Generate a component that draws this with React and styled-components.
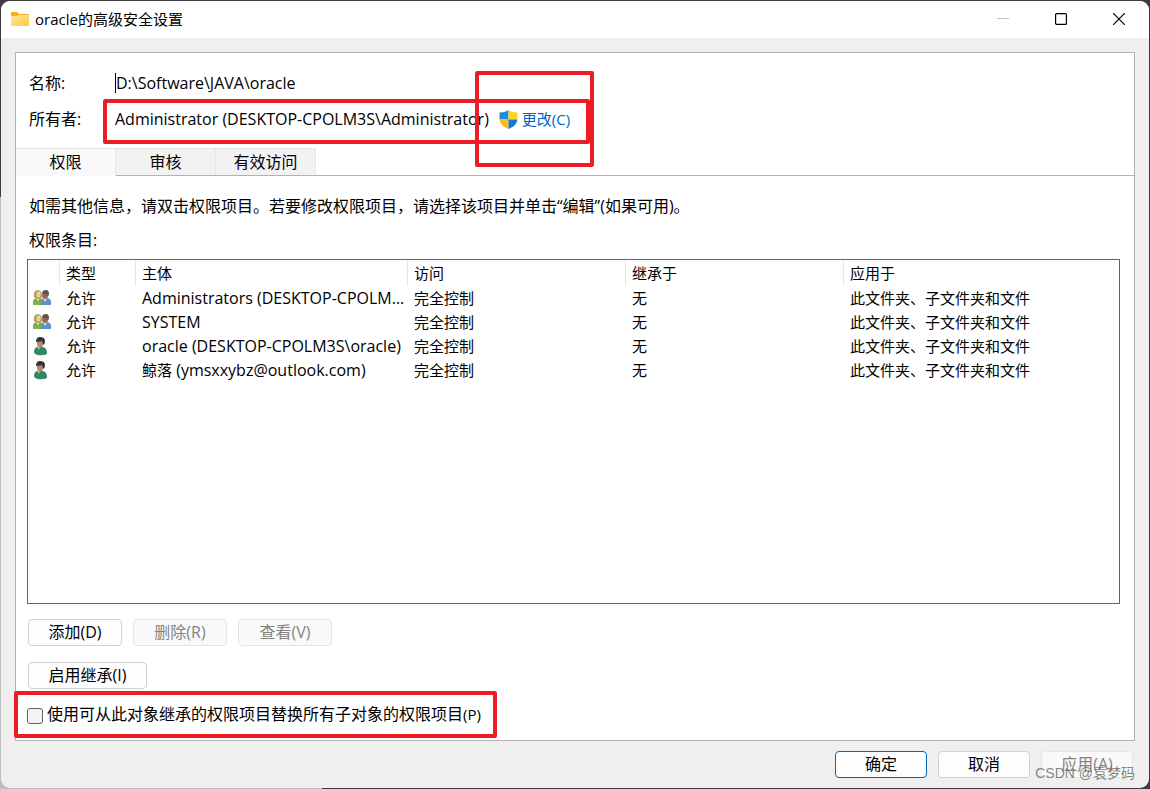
import React from 'react';
import styled, { createGlobalStyle, css } from 'styled-components';

const GlobalStyle = createGlobalStyle`
	* {
		box-sizing: border-box;
	}

	body {
		margin: 0;
		background: #3c3c3c;
		color: #000;
		font-family: 'Open Sans', 'Noto Sans CJK SC', sans-serif;
		font-size: 15px;
	}

	button,
	input {
		font: inherit;
		color: inherit;
	}
`;

const Desktop = styled.div`
	min-height: 100vh;
	padding: 1px;
	display: flex;
	background: linear-gradient(#3c3c3c 0 25%, #bdbdbd 25% 100%) left / 1px 100%
			no-repeat,
		linear-gradient(90deg, #bdbdbd 0 28%, #3c3c3c 28% 100%) bottom / 100% 14px
			no-repeat,
		#3c3c3c;
`;

const Window = styled.div`
	position: relative;
	flex: 1;
	min-width: 0;
	display: flex;
	flex-direction: column;
	background: #efefef;
	border-radius: 9px;
	overflow: hidden;
`;

const TitleBar = styled.header`
	height: 37px;
	padding: 0 1px 1px 9px;
	display: flex;
	align-items: center;
	background: #fff;
`;

const Title = styled.h1`
	flex: 1;
	margin: 0 0 0 5px;
	font-size: 15px;
	font-weight: 400;
	line-height: 24px;
`;

const Caption = styled.button`
	width: 58px;
	height: 36px;
	padding: 0;
	display: flex;
	align-items: center;
	justify-content: center;
	background: none;
	border: none;
	color: ${(props) => (props.disabled ? '#c4c4c4' : '#000')};
`;

const Panel = styled.main`
	flex: 1;
	margin: 14px 14px 0;
	display: flex;
	flex-direction: column;
	background: #fff;
	border: 1px solid #b2b2b2;
`;

const Summary = styled.div`
	padding: 15px 13px 13px;
	display: flex;
	flex-direction: column;
	gap: 6px;
`;

const Field = styled.div`
	height: 30px;
	display: flex;
	align-items: center;
	line-height: 24px;
`;

const FieldLabel = styled.label`
	width: 86px;
	font-size: 16px;
`;

const NameInput = styled.input`
	flex: 1;
	height: 20px;
	padding: 0;
	background: none;
	border: none;
	border-left: 1px solid #000;
	outline: none;
	font-size: 16px;
`;

const Owner = styled.div`
	position: relative;
	display: flex;
	align-items: center;
	gap: 10px;
`;

const OwnerName = styled.span`
	font-size: 16px;
`;

const ChangeLink = styled.a`
	display: flex;
	align-items: center;
	gap: 4px;
	color: #0066cc;
	text-decoration: none;
`;

const Mark = styled.div`
	position: absolute;
	border: 4px solid #ee1c25;
	border-radius: 2px;
	pointer-events: none;
`;

const OwnerMark = styled(Mark)`
	inset: -8px -20px -13px -12px;
`;

const ChangeMark = styled(Mark)`
	top: -36px;
	right: -24px;
	bottom: -36px;
	width: 119px;
`;

const OptionMark = styled(Mark)`
	inset: -11px -16px -12px -13px;
`;

const Tabs = styled.div`
	height: 29px;
	padding-top: 1px;
	display: flex;
	border-bottom: 1px solid #b2b2b2;
`;

const Tab = styled.button`
	width: 100px;
	height: 27px;
	padding: 0 0 1px;
	background: #f2f2f2;
	border: 1px solid #e5e5e5;
	border-left: none;
	border-bottom: none;
	font-size: 16px;
	line-height: 24px;

	${(props) =>
		props.$active &&
		css`
			height: 28px;
			background: #f9f9f9;
		`}
`;

const Pane = styled.section`
	flex: 1;
	padding: 18px 14px 14px 11px;
	display: flex;
	flex-direction: column;
`;

const Note = styled.p`
	margin: 0 0 10px 2px;
	font-size: 16px;
	line-height: 24px;
`;

const ListLabel = styled.div`
	margin: 0 0 7px 2px;
	font-size: 16px;
	line-height: 24px;
`;

const List = styled.div`
	flex: 1;
	border: 1px solid #646464;
`;

const Table = styled.table`
	width: 100%;
	table-layout: fixed;
	border-collapse: separate;
	border-spacing: 0;
`;

const Th = styled.th`
	width: ${(props) => props.$width || 'auto'};
	height: 26px;
	padding: 0 6px;
	border-right: 1px solid #e5e5e5;
	font-weight: 400;
	line-height: 24px;
	text-align: left;

	&:last-child {
		border-right: none;
	}
`;

const Td = styled.td`
	height: 24px;
	padding: 0 2px 0 6px;
	line-height: 24px;
	white-space: nowrap;
	overflow: hidden;
	text-overflow: ellipsis;

	&:first-child {
		padding: 0 4px;
	}

	svg {
		display: block;
	}
`;

const PrincipalTd = styled(Td)`
	font-size: 16px;
`;

const DisplayName = styled.span`
	font-size: 15px;
`;

const Actions = styled.div`
	margin: ${(props) => props.$top}px 0 0 1px;
	display: flex;
	gap: 11px;
`;

const Button = styled.button`
	min-width: ${(props) => props.$width || 94}px;
	height: 27px;
	padding: 0 0 2px;
	background: #fdfdfd;
	border: 1px solid ${(props) => (props.$primary ? '#0067c0' : '#d0d0d0')};
	border-radius: 4px;
	font-size: 16px;
	line-height: 24px;

	&:disabled {
		background: #f9f9f9;
		border-color: #e5e5e5;
		color: #838383;
	}
`;

const Key = styled.span`
	font-size: 15px;
`;

const Option = styled.label`
	position: relative;
	align-self: flex-start;
	margin-top: 13px;
	height: 24px;
	display: flex;
	align-items: center;
	gap: 4px;
	font-size: 16px;
	line-height: 24px;
	white-space: nowrap;
`;

const Checkbox = styled.input`
	appearance: none;
	width: 16px;
	height: 16px;
	margin: 4px 0 0;
	background: #f3f3f3;
	border: 1px solid #626262;
	border-radius: 3px;
`;

const Footer = styled.footer`
	padding: 10px 16px 10px 14px;
	display: flex;
	justify-content: flex-end;
	gap: 11px;
`;

const Watermark = styled.div`
	position: absolute;
	right: 14px;
	bottom: 5px;
	color: rgba(110, 110, 110, 0.85);
	font-family: 'Liberation Sans', 'Noto Sans CJK SC', sans-serif;
	font-size: 14px;
	line-height: 20px;
	pointer-events: none;
`;

const FolderIcon = () => (
	<svg width="20" height="16" viewBox="0 0 20 16" aria-hidden="true">
		<defs>
			<linearGradient id="folder" x1="0" y1="0" x2="1" y2="1">
				<stop offset="0" stopColor="#ffe9a0" />
				<stop offset="1" stopColor="#ffc83c" />
			</linearGradient>
		</defs>
		<path d="M1 2q0-1 1-1h5l2 2h9q1 0 1 1v4H1z" fill="#f5ae1a" />
		<path d="M1 5h6l2-1h9q1 0 1 1v9q0 1-1 1H2q-1 0-1-1z" fill="url(#folder)" />
	</svg>
);

const ShieldIcon = () => (
	<svg width="19" height="19" viewBox="0 0 19 19" aria-hidden="true">
		<defs>
			<clipPath id="shield">
				<path d="M9.500 0Q6 2.500 0.500 2.500v6q0 7 9 10.500Q18.500 15.500 18.500 8.500v-6Q13 2.500 9.500 0z" />
			</clipPath>
		</defs>
		<g clipPath="url(#shield)">
			<path d="M0 0h9.500v9.500H0z" fill="#1c8fdf" />
			<path d="M9.500 0H19v9.500H9.500z" fill="#ffd21f" />
			<path d="M0 9.500h9.500V19H0z" fill="#fdbd12" />
			<path d="M9.500 9.500H19V19H9.500z" fill="#1479cf" />
		</g>
	</svg>
);

const GroupIcon = () => (
	<svg width="20" height="18" viewBox="0 0 20 18" aria-hidden="true">
		<path d="M1 16v-3q0-3 3-4l3-1 3 2v6z" fill="#7fb04d" />
		<path d="M4 9l2 3 2-3z" fill="#e9f0d8" />
		<path d="M2 8q-1-7 4-7 4 0 4 7l-2 2H5z" fill="#b5a35e" />
		<ellipse cx="6.500" cy="5.500" rx="2" ry="3" fill="#f0cfa6" />
		<path d="M9 16v-3q0-3 3-4h4q3 1 3 4v3z" fill="#5f91cb" />
		<path d="M11 9l2 4 2-4z" fill="#dce8f5" />
		<ellipse cx="13" cy="6" rx="3" ry="4" fill="#98694a" />
		<path d="M10 5q0-4 4-4 3 0 3 4l-1 3-1-3q-3 1-4-1z" fill="#555" />
	</svg>
);

const UserIcon = () => (
	<svg width="20" height="20" viewBox="0 0 20 20" aria-hidden="true">
		<path d="M2 16q0-4 3-5l4-1 4 2q2 1 2 6-4 2-9 1-4-1-4-3z" fill="#348765" />
		<path d="M5 11l2 3 1-3z" fill="#a9cdbb" />
		<ellipse cx="8" cy="7.500" rx="3" ry="4" fill="#b98a68" />
		<path d="M4 6q0-5 4-5 5 0 5 4 0 3-2 4l-1-4q-3 1-6 1z" fill="#333536" />
	</svg>
);

const columns = [
	{ label: '', width: '32px' },
	{ label: '类型', width: '76px' },
	{ label: '主体', width: '272px' },
	{ label: '访问', width: '218px' },
	{ label: '继承于', width: '218px' },
	{ label: '应用于' },
];

const entries = [
	{ group: true, account: 'Administrators (DESKTOP-CPOLM3S\\Administrators)' },
	{ group: true, account: 'SYSTEM' },
	{ group: false, account: 'oracle (DESKTOP-CPOLM3S\\oracle)' },
	{ group: false, name: '鲸落', account: ' (ymsxxybz@outlook.com)' },
];

const tabs = ['权限', '审核', '有效访问'];

const App = () => {
	return (
		<Desktop>
			<GlobalStyle />
			<Window>
				<TitleBar>
					<FolderIcon />
					<Title>oracle的高级安全设置</Title>
					<Caption disabled aria-label="最小化">
						<svg width="12" height="12" viewBox="0 0 12 12">
							<path d="M0 5.500h12" stroke="currentColor" />
						</svg>
					</Caption>
					<Caption aria-label="最大化">
						<svg width="12" height="12" viewBox="0 0 12 12">
							<rect
								x="0.600"
								y="0.600"
								width="10.800"
								height="10.800"
								rx="1"
								fill="none"
								stroke="currentColor"
								strokeWidth="1.200"
							/>
						</svg>
					</Caption>
					<Caption aria-label="关闭">
						<svg width="12" height="12" viewBox="0 0 12 12">
							<path
								d="M0 0l12 12M12 0L0 12"
								stroke="currentColor"
								strokeWidth="1.200"
							/>
						</svg>
					</Caption>
				</TitleBar>

				<Panel>
					<Summary>
						<Field>
							<FieldLabel htmlFor="name">名称:</FieldLabel>
							<NameInput
								id="name"
								readOnly
								value="D:\Software\JAVA\oracle"
							/>
						</Field>
						<Field>
							<FieldLabel as="div">所有者:</FieldLabel>
							<Owner>
								<OwnerName>
									Administrator (DESKTOP-CPOLM3S\Administrator)
								</OwnerName>
								<ChangeLink href="#">
									<ShieldIcon />
									更改(C)
								</ChangeLink>
								<OwnerMark />
								<ChangeMark />
							</Owner>
						</Field>
					</Summary>

					<Tabs role="tablist">
						{tabs.map((tab, i) => (
							<Tab
								key={tab}
								role="tab"
								aria-selected={i === 0}
								$active={i === 0}
							>
								{tab}
							</Tab>
						))}
					</Tabs>

					<Pane>
						<Note>
							如需其他信息，请双击权限项目。若要修改权限项目，请选择该项目并单击“编辑”(如果可用)。
						</Note>
						<ListLabel id="entries">权限条目:</ListLabel>
						<List>
							<Table aria-labelledby="entries">
								<thead>
									<tr>
										{columns.map((column) => (
											<Th key={column.label} $width={column.width}>
												{column.label}
											</Th>
										))}
									</tr>
								</thead>
								<tbody>
									{entries.map((entry) => (
										<tr key={entry.account}>
											<Td>{entry.group ? <GroupIcon /> : <UserIcon />}</Td>
											<Td>允许</Td>
											<PrincipalTd>
												{entry.name && <DisplayName>{entry.name}</DisplayName>}
												{entry.account}
											</PrincipalTd>
											<Td>完全控制</Td>
											<Td>无</Td>
											<Td>此文件夹、子文件夹和文件</Td>
										</tr>
									))}
								</tbody>
							</Table>
						</List>

						<Actions $top={15}>
							<Button>添加(D)</Button>
							<Button disabled>删除(R)</Button>
							<Button disabled>查看(V)</Button>
						</Actions>
						<Actions $top={16}>
							<Button $width={119}>启用继承(I)</Button>
						</Actions>

						<Option>
							<Checkbox type="checkbox" />
							<span>
								使用可从此对象继承的权限项目替换所有子对象的权限项目
								<Key>(P)</Key>
							</span>
							<OptionMark />
						</Option>
					</Pane>
				</Panel>

				<Footer>
					<Button $width={92} $primary>
						确定
					</Button>
					<Button $width={92}>取消</Button>
					<Button $width={92} disabled>
						应用(A)
					</Button>
				</Footer>
				<Watermark>CSDN @袁梦码</Watermark>
			</Window>
		</Desktop>
	);
};

export default App;
